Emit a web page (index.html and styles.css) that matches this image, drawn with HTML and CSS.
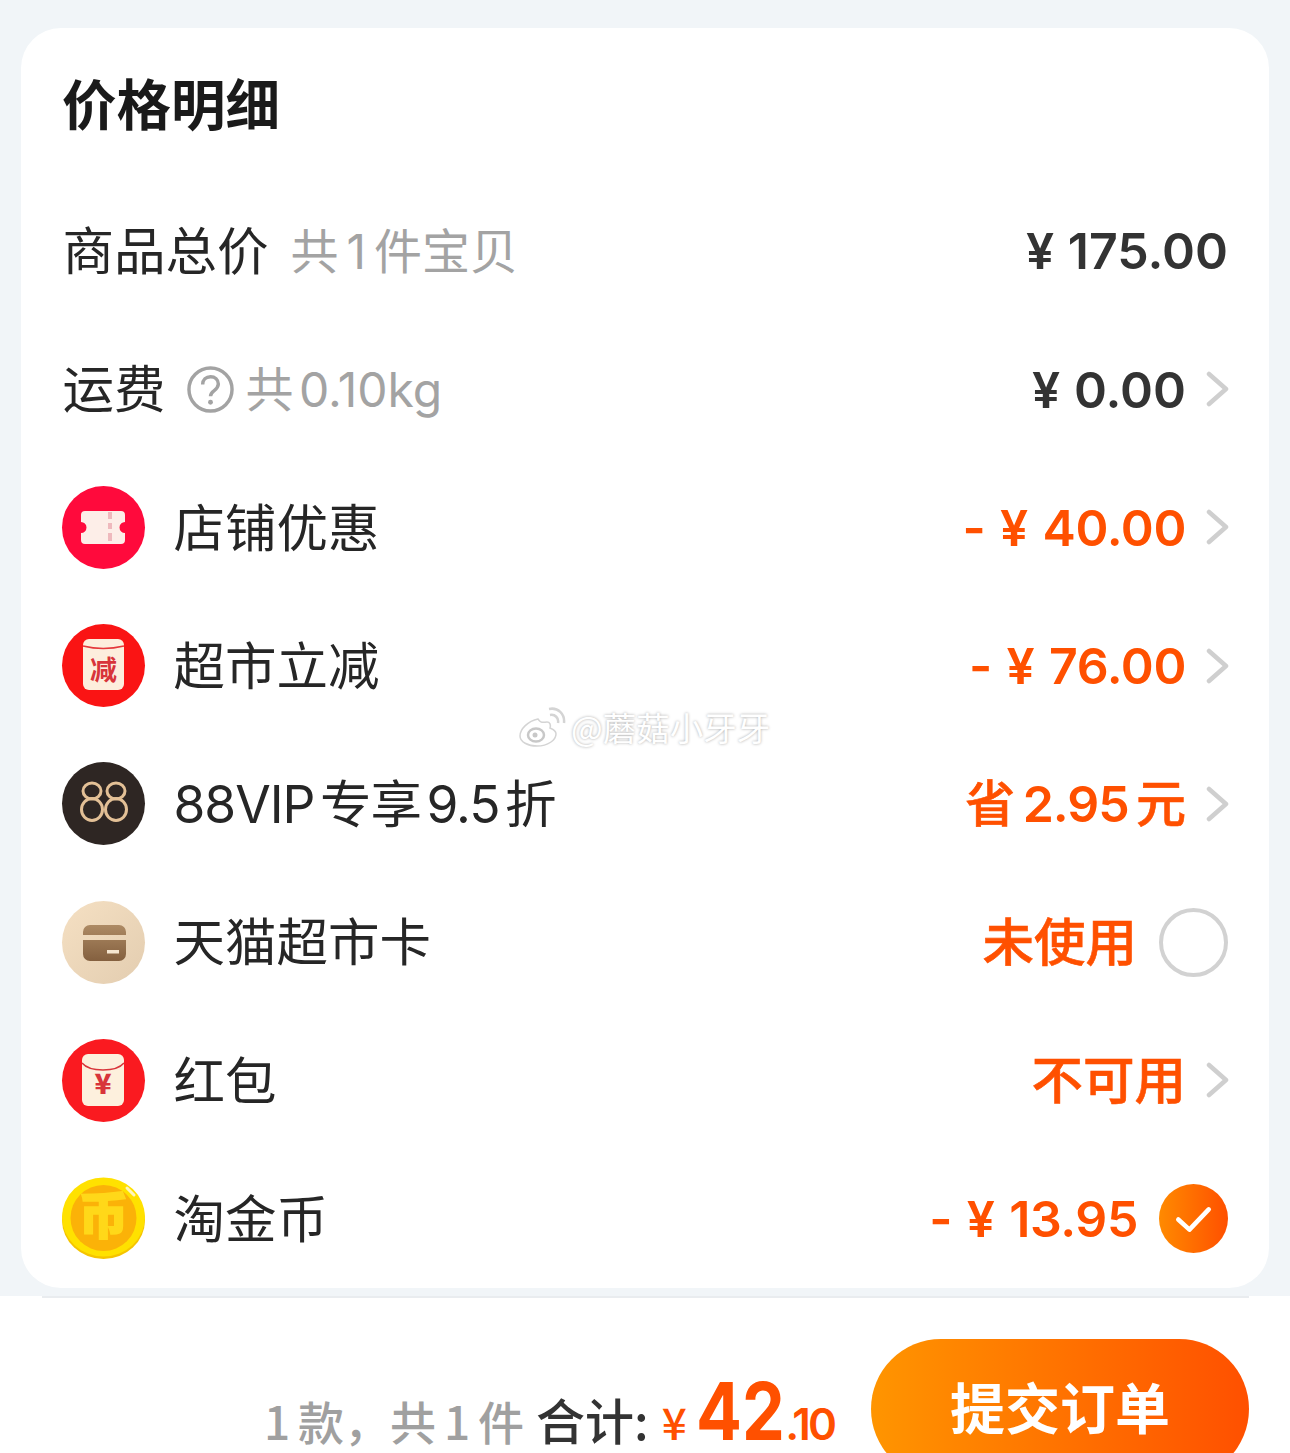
FILE: index.html
```html
<!DOCTYPE html>
<html lang="zh-CN">
  <head>
    <meta charset="UTF-8" />
    <title>价格明细</title>
    <link rel="stylesheet" href="styles.css">
  </head>

  <body>
    <main class="page">
      <section class="card">
        <h1 class="title">价格明细</h1>

        <div class="row">
          <span class="label">商品总价</span>
          <span class="sub sub-total">共 1 件宝贝</span>
          <span class="value dark">¥ 175.00</span>
        </div>

        <div class="row">
          <span class="label">运费</span>
          <svg class="help" viewBox="0 0 48 48">
            <circle cx="24" cy="24" r="22" fill="none" stroke="#a3a3a3" stroke-width="3.500" />
            <path d="M16 19c0-5 3.500-8 8-8s8 3 8 7.500c0 3.500-2 5-4.500 6.800-2.200 1.600-3.500 2.800-3.500 5.700" fill="none" stroke="#a3a3a3" stroke-width="3.500" />
            <circle cx="24" cy="37" r="2.500" fill="#a3a3a3" />
          </svg>
          <span class="sub sub-weight">共 0.10kg</span>
          <span class="value dark">¥ 0.00</span>
          <svg class="arrow" viewBox="0 0 24 36"><path d="M3 3l17 15L3 33" /></svg>
        </div>

        <div class="row">
          <svg class="icon" viewBox="0 0 83 83">
            <circle cx="41.500" cy="41.500" r="41.500" fill="#ff0a3c" />
            <path d="M23 25h36a4 4 0 0 1 4 4v7a5.500 5.500 0 0 0 0 11v7a4 4 0 0 1-4 4H23a4 4 0 0 1-4-4v-7a5.500 5.500 0 0 0 0-11v-7a4 4 0 0 1 4-4z" fill="#fdeee8" />
            <path d="M48 26v7M48 37v6M48 47v8" stroke="#efb9bd" stroke-width="4" />
          </svg>
          <span class="label">店铺优惠</span>
          <span class="value orange minus">- ¥ 40.00</span>
          <svg class="arrow" viewBox="0 0 24 36"><path d="M3 3l17 15L3 33" /></svg>
        </div>

        <div class="row">
          <svg class="icon" viewBox="0 0 83 83">
            <circle cx="41.500" cy="41.500" r="41.500" fill="#fa1414" />
            <rect x="21" y="15" width="41" height="51" rx="6" fill="#fdeedd" />
            <path d="M21 22q20 5 41 0" fill="none" stroke="#e5383b" stroke-width="1.500" />
            <text x="41.500" y="56" class="icon-char">减</text>
          </svg>
          <span class="label">超市立减</span>
          <span class="value orange minus">- ¥ 76.00</span>
          <svg class="arrow" viewBox="0 0 24 36"><path d="M3 3l17 15L3 33" /></svg>
        </div>

        <div class="row">
          <svg class="icon" viewBox="0 0 83 83">
            <circle cx="41.500" cy="41.500" r="41.500" fill="#2e2623" />
            <g fill="none" stroke="#e3c096" stroke-width="3">
              <ellipse cx="30" cy="29" rx="9" ry="8" />
              <ellipse cx="30" cy="47.500" rx="10.500" ry="11" />
              <ellipse cx="54" cy="29" rx="9" ry="8" />
              <ellipse cx="54" cy="47.500" rx="10.500" ry="11" />
            </g>
          </svg>
          <span class="label label-vip">88VIP 专享 9.5 折</span>
          <span class="value orange cjk saving">省 <span class="num">2.95</span> 元</span>
          <svg class="arrow" viewBox="0 0 24 36"><path d="M3 3l17 15L3 33" /></svg>
        </div>

        <div class="row">
          <svg class="icon" viewBox="0 0 83 83">
            <defs>
              <linearGradient id="beige" x1="0" y1="0" x2="1" y2="1">
                <stop offset="0" stop-color="#f5e0c3" />
                <stop offset="1" stop-color="#e3cdb0" />
              </linearGradient>
              <linearGradient id="brown" x1="0" y1="0" x2="0" y2="1">
                <stop offset="0" stop-color="#ad8a64" />
                <stop offset="1" stop-color="#84603f" />
              </linearGradient>
            </defs>
            <circle cx="41.500" cy="41.500" r="41.500" fill="url(#beige)" />
            <path d="M21 31a7 7 0 0 1 7-7h29a7 7 0 0 1 7 7v3H21zM21 39h43v14a7 7 0 0 1-7 7H28a7 7 0 0 1-7-7z" fill="url(#brown)" />
            <rect x="45" y="49" width="12" height="3.500" fill="#f5e6d0" />
          </svg>
          <span class="label">天猫超市卡</span>
          <span class="value orange cjk">未使用</span>
          <span class="radio"></span>
        </div>

        <div class="row">
          <svg class="icon" viewBox="0 0 83 83">
            <circle cx="41.500" cy="41.500" r="41.500" fill="#fa1a20" />
            <rect x="20" y="15" width="42" height="52" rx="6" fill="#fdf0dd" />
            <path d="M20 24q6 7 21 7t21-7" fill="none" stroke="#d8353a" stroke-width="1.500" />
            <text x="41" y="55" class="icon-char icon-yen">¥</text>
          </svg>
          <span class="label">红包</span>
          <span class="value orange cjk">不可用</span>
          <svg class="arrow" viewBox="0 0 24 36"><path d="M3 3l17 15L3 33" /></svg>
        </div>

        <div class="row">
          <svg class="icon" viewBox="0 0 83 83">
            <ellipse cx="41.500" cy="43" rx="41.500" ry="39" fill="#f5c400" />
            <ellipse cx="41.500" cy="40" rx="41.500" ry="39.500" fill="#ffe100" />
            <circle cx="41.500" cy="41" r="33" fill="#fbb208" />
            <text x="41.500" y="57" class="coin-char">币</text>
            <path d="M65 11l7 7" stroke="#fff6c0" stroke-width="3" stroke-linecap="round" />
          </svg>
          <span class="label">淘金币</span>
          <span class="value orange minus">- ¥ 13.95</span>
          <svg class="checked" viewBox="0 0 68 68">
            <defs>
              <linearGradient id="tick" x1="0" y1="0" x2="1" y2="0">
                <stop offset="0" stop-color="#ff8a00" />
                <stop offset="1" stop-color="#ff5000" />
              </linearGradient>
            </defs>
            <circle cx="34" cy="34" r="34" fill="url(#tick)" />
            <path d="M19 35l11 10 19-20" fill="none" stroke="#fff" stroke-width="4.500" stroke-linecap="round" stroke-linejoin="round" />
          </svg>
        </div>
      </section>

      <footer class="footer">
        <div class="summary">
          <span class="count">1 款，共 1 件</span>
          <span class="sum-label">合计:</span>
          <span class="yen">¥</span>
          <span class="int">42</span>
          <span class="dec">.10</span>
        </div>
        <button class="submit">提交订单</button>
      </footer>

      <div class="watermark">
        <svg class="weibo" viewBox="0 0 48 40">
          <path d="M20 12C10 14 2 22 2 29c0 6 8 10 17 10 11 0 19-6 19-12 0-4-4-5-6-6 1-3 0-6-3-6-3 0-6 2-9-3z" fill="#fff" stroke="#d4d4d4" stroke-width="1.500" />
          <ellipse cx="18" cy="28" rx="8" ry="6.500" fill="none" stroke="#c8c8c8" stroke-width="2.500" />
          <circle cx="17" cy="28" r="2.500" fill="#c8c8c8" />
          <path d="M32 8c5-1 9 3 8 8M31 2c9-2 16 5 15 14" fill="none" stroke="#d4d4d4" stroke-width="2.500" />
        </svg>
        <span class="mark-text">@蘑菇小牙牙</span>
      </div>
    </main>
  </body>
</html>
```

FILE: styles.css
```css
* {
  box-sizing: border-box;
}

html,
body {
  margin: 0;
  height: 1453px;
  overflow: hidden;
}

body {
  font-family: "Inter", "Noto Sans CJK SC", sans-serif;
  background-color: #fff;
  color: #1f1f1f;
}

.page {
  position: relative;
  height: 1453px;
  padding-top: 28px;
  background: linear-gradient(#f1f5f8 1296px, #fff 1296px);
}

.card {
  margin: 0 21px;
  padding: 0 41px;
  height: 1260px;
  background-color: #fff;
  border-radius: 40px;
}

.title {
  height: 153.800px;
  margin: 0;
  padding: 0 0 6px 0;
  display: flex;
  align-items: center;
  font-family: "Noto Sans CJK SC", sans-serif;
  font-size: 54.500px;
  font-weight: 700;
  color: #1a1a1a;
}

.row {
  height: 138.250px;
  display: flex;
  align-items: center;
}

.label {
  font-size: 51.500px;
  line-height: 1;
  margin: 2px 0 0 0.500px;
  color: #262626;
}

.label-vip {
  letter-spacing: -1px;
  word-spacing: -8px;
}

.sub {
  font-size: 48px;
  color: #a3a3a3;
  line-height: 1;
  margin-top: 2px;
}

.sub-total {
  margin-left: 22px;
  word-spacing: -5.500px;
}

.sub-weight {
  word-spacing: -8px;
}

.help {
  width: 47px;
  height: 47px;
  margin: 0 12px 0 21px;
}

.icon {
  width: 83px;
  height: 83px;
  flex: none;
  margin-right: 28px;
  overflow: visible;
}

.value {
  margin: 1px 0 0 auto;
  font-size: 50px;
  font-weight: 600;
  line-height: 1;
}

.dark {
  color: #333;
  word-spacing: 1px;
}

.orange {
  color: #ff5000;
}

.minus {
  letter-spacing: -0.400px;
  word-spacing: 2.500px;
}

.cjk {
  font-size: 51.500px;
  font-weight: 500;
  -webkit-text-stroke: 0.600px #ff5000;
}

.saving {
  font-size: 50px;
  word-spacing: -6px;
}

.num {
  font-weight: 600;
  letter-spacing: -1px;
  -webkit-text-stroke: 0;
}

.arrow {
  width: 24px;
  height: 36px;
  margin: 0 -2px 0 20px;
  fill: none;
  stroke: #cfcfcf;
  stroke-width: 4.500;
  stroke-linecap: round;
  stroke-linejoin: round;
}

.radio {
  width: 69px;
  height: 69px;
  margin-left: 22px;
  border: 4px solid #d2d2d2;
  border-radius: 50%;
}

.checked {
  width: 69px;
  height: 69px;
  margin-left: 21px;
}

.icon-char {
  font-family: "Noto Sans CJK SC", sans-serif;
  font-size: 27px;
  font-weight: 700;
  fill: #d8343a;
  text-anchor: middle;
}

.icon-yen {
  font-size: 28px;
  font-weight: 900;
}

.coin-char {
  font-family: "Noto Sans CJK SC", sans-serif;
  font-size: 50px;
  font-weight: 900;
  fill: #ffd819;
  stroke: #ffd819;
  stroke-width: 1.500px;
  text-anchor: middle;
}

.footer {
  margin: 8px 0 0;
  height: 157px;
  padding: 43px 41px 0 0;
  display: flex;
  justify-content: flex-end;
  background-color: #fff;
  position: relative;
}

.footer::before {
  content: "";
  position: absolute;
  top: 0;
  left: 42px;
  right: 41px;
  height: 2px;
  background-color: #e9ecef;
}

.summary {
  display: flex;
  align-items: baseline;
  height: 64px;
  margin: 40px 37px 0 0;
  line-height: 1;
  font-family: "Noto Sans CJK SC", sans-serif;
}

.count {
  font-size: 46px;
  font-weight: 500;
  word-spacing: -2.500px;
  color: #a0a0a0;
}

.sum-label {
  margin-left: 12px;
  font-size: 49px;
  font-weight: 500;
  color: #333;
}

.yen {
  font-size: 44px;
  font-weight: 500;
  color: #ff5000;
  margin-left: 13px;
}

.int {
  font-family: "Inter", sans-serif;
  font-size: 80px;
  line-height: 0.800;
  font-weight: 700;
  color: #ff5000;
  margin: 0 -15px 0 9px;
  transform: scaleX(0.85);
  transform-origin: left;
}

.dec {
  font-family: "Inter", sans-serif;
  font-size: 44px;
  font-weight: 600;
  letter-spacing: -3px;
  color: #ff5000;
}

.submit {
  width: 378px;
  height: 140px;
  border: none;
  border-radius: 70px;
  color: #fff;
  font-family: "Noto Sans CJK SC", sans-serif;
  font-size: 55px;
  font-weight: 700;
  padding: 0 0 8px;
  background: linear-gradient(90deg, #ff9500, #ff5000);
}

.watermark {
  position: absolute;
  left: 518px;
  top: 702px;
  display: flex;
  align-items: center;
  gap: 5px;
}

.weibo {
  width: 48px;
  height: 40px;
}

.mark-text {
  font-family: "Noto Sans CJK SC", sans-serif;
  font-size: 33.500px;
  color: #fff;
  text-shadow: 0 0 3px rgba(0, 0, 0, 0.35);
}
```
